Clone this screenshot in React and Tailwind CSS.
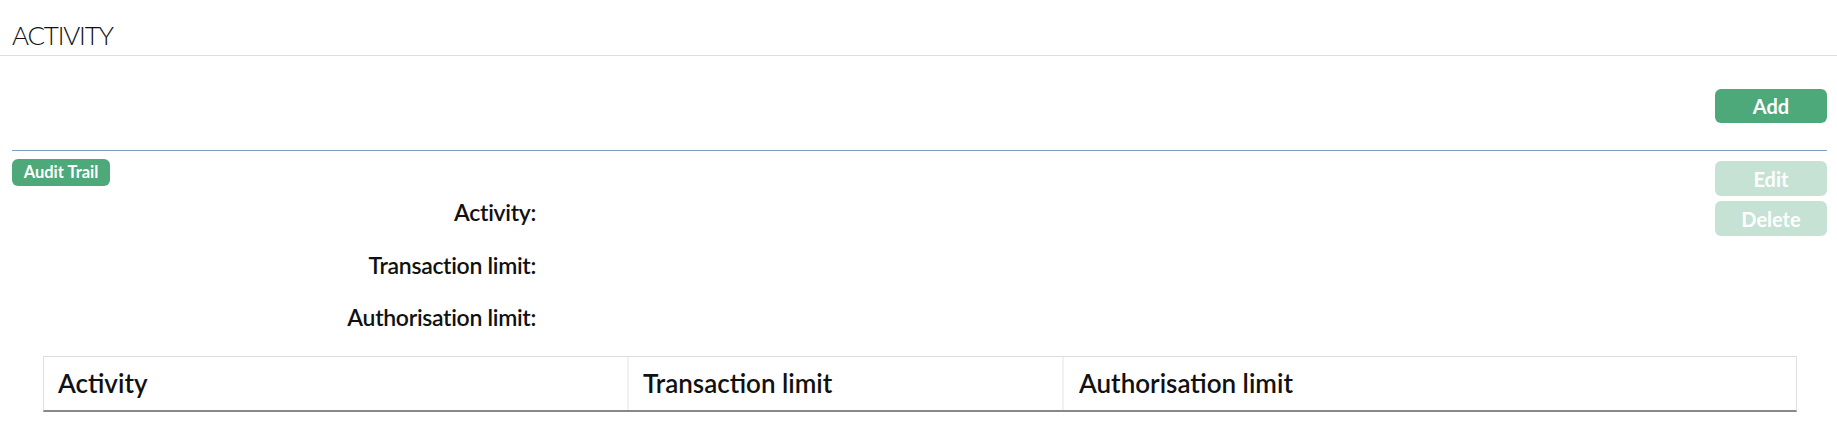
import React from "react";

const font = { fontFamily: "Lato, 'Noto Sans', sans-serif" };

export default function App() {
  return (
    <div className="w-[1837px] h-[430px] bg-white text-[#111111]" style={font}>
      <div className="h-[56px] pl-3 pt-[22px] border-b border-[#dddddd]">
        <h1 className="text-[26px] leading-[26px] font-light tracking-[-1.2px] text-[#111111]">ACTIVITY</h1>
      </div>
      <div className="pl-3 pr-[10px]">
        <div className="flex justify-end mt-[33px]">
          <button className="w-[112px] h-[34px] rounded-[6px] bg-[#4da87a] text-white text-[20px] font-bold leading-none">
            Add
          </button>
        </div>
        <div className="mt-[27px] border-t border-[#7c9fbf]" />
        <div className="flex">
          <div className="flex-1">
            <div className="mt-[8px]">
              <span className="inline-flex items-center justify-center w-[98px] h-[27px] rounded-[6px] bg-[#4da87a] text-white text-[16.5px] font-bold leading-none">
                Audit Trail
              </span>
            </div>
            <div className="w-[524px] text-right text-[23px] leading-[52.5px] font-semibold tracking-[-0.3px]">
              <div>Activity:</div>
              <div>Transaction limit:</div>
              <div>Authorisation limit:</div>
            </div>
          </div>
          <div className="flex flex-col gap-[5px] pt-[10px]">
            <button className="w-[112px] h-[35px] rounded-[6px] bg-[#c5e2d4] text-white text-[20px] font-bold leading-none">
              Edit
            </button>
            <button className="w-[112px] h-[35px] rounded-[6px] bg-[#c5e2d4] text-white text-[20px] font-bold leading-none">
              Delete
            </button>
          </div>
        </div>
        <div className="ml-[31px] mr-[30px] mt-[12px] flex border border-[#dddddd] border-b-2 border-b-[#888888] text-[26px] leading-[53px] font-semibold">
          <div className="w-[583px] pl-[14px]">Activity</div>
          <div className="w-[435px] pl-[14px] border-l-2 border-[#f1f1f1]">Transaction limit</div>
          <div className="flex-1 pl-[15px] border-l-2 border-[#f1f1f1]">Authorisation limit</div>
        </div>
      </div>
    </div>
  );
}
